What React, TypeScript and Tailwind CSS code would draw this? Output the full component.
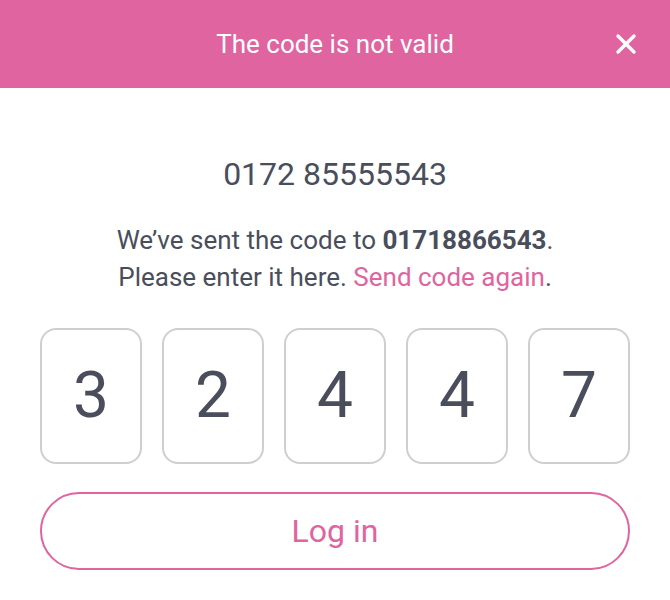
import { X } from 'lucide-react';

const digits = ['3', '2', '4', '4', '7'];

export default function App() {
  return (
    <div className="min-h-[600px] w-[670px] bg-white font-['Roboto',sans-serif] text-[#4a4d5c]">
      <div className="relative flex h-[88px] items-center justify-center bg-[#e064a0]">
        <span className="text-[26px] text-white">The code is not valid</span>
        <button className="absolute right-[28px] top-[28px] text-white">
          <X className="h-[32px] w-[32px]" strokeWidth={2.5} />
        </button>
      </div>

      <div className="px-[40px]">
        <p className="mt-[66px] text-center text-[32px] leading-[40px]">0172 85555543</p>

        <p className="mt-[28px] text-center text-[26px] leading-[37px]">
          We’ve sent the code to <span className="font-bold">01718866543</span>.
          <br />
          Please enter it here. <a className="text-[#e064a0]">Send code again</a>.
        </p>

        <div className="mt-[32px] flex gap-[20px]">
          {digits.map((d, i) => (
            <div
              key={i}
              className="flex h-[136px] flex-1 items-center justify-center rounded-[16px] border-2 border-[#cfcfd3] text-[64px]"
            >
              {d}
            </div>
          ))}
        </div>

        <button className="mt-[28px] flex h-[78px] w-full items-center justify-center rounded-full border-2 border-[#e064a0] text-[32px] text-[#e064a0]">
          Log in
        </button>
      </div>
    </div>
  );
}
